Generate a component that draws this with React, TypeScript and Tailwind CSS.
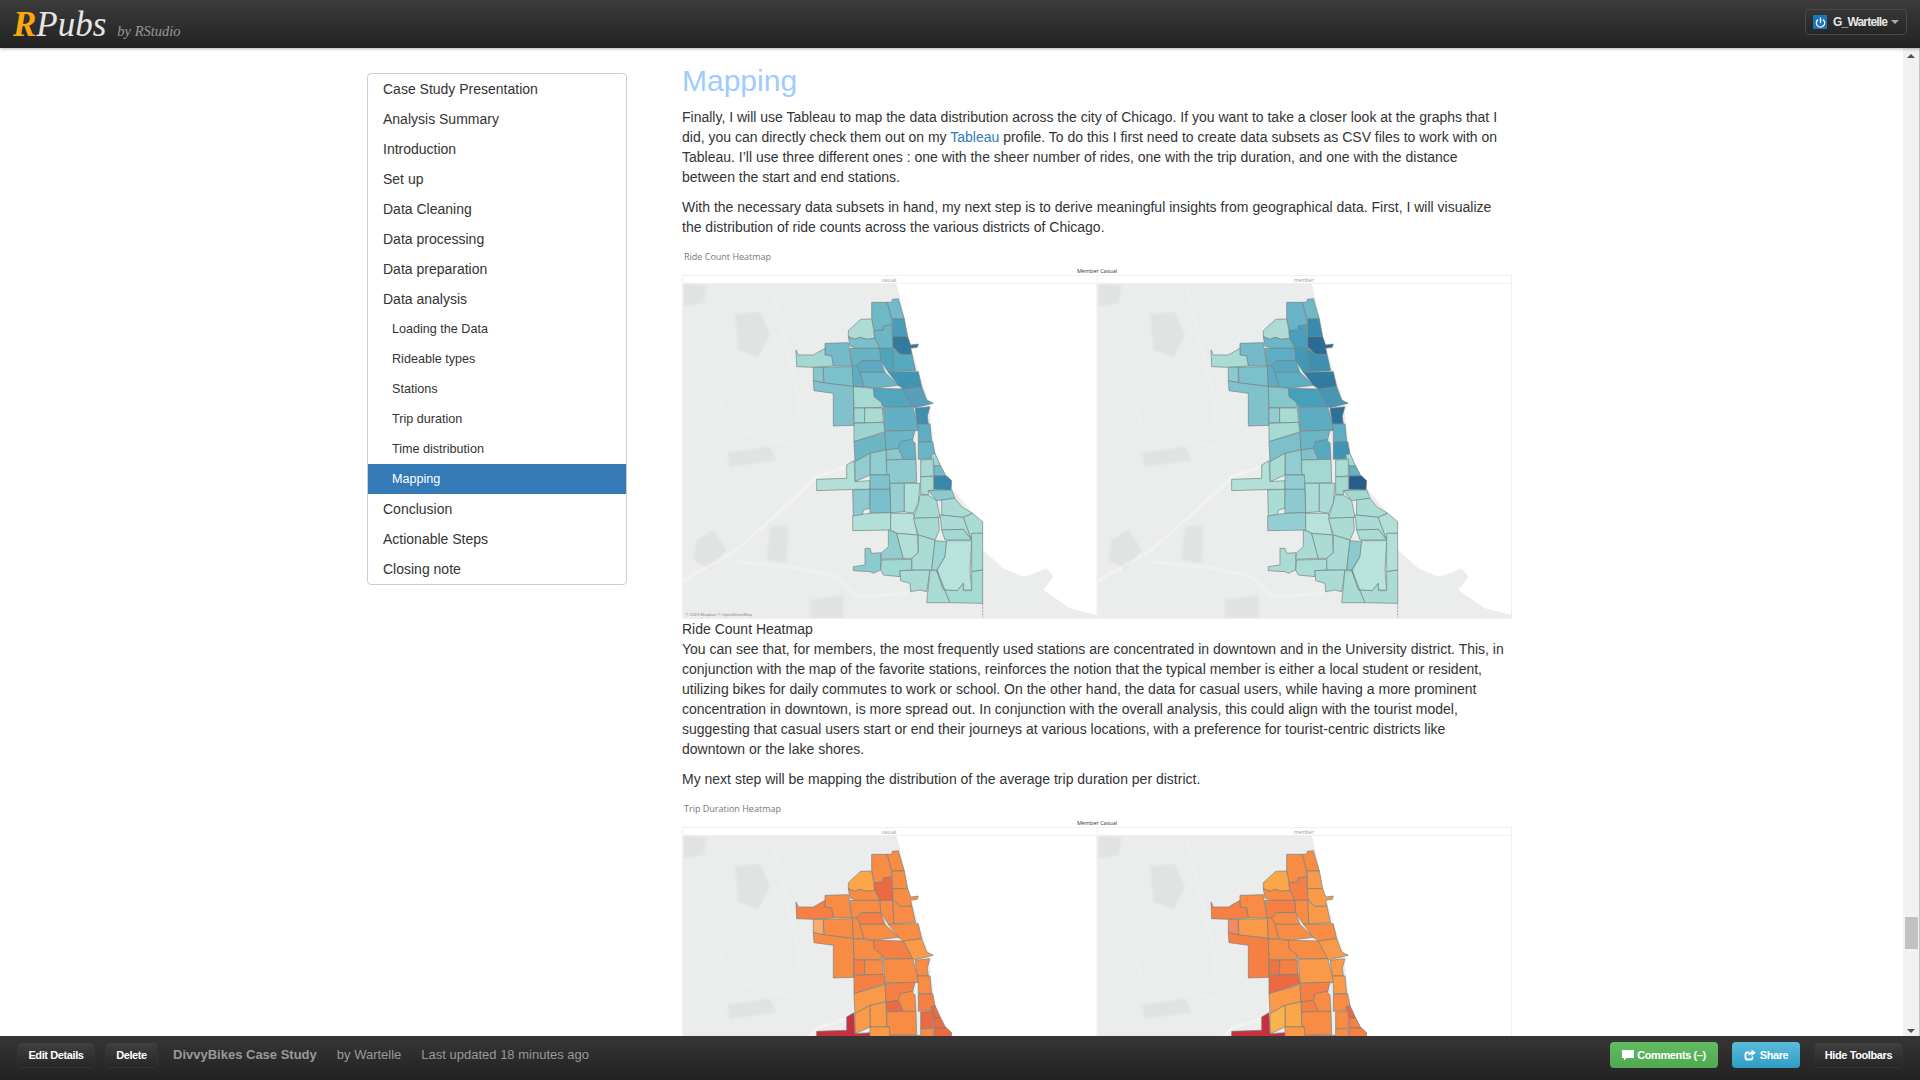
import { Power } from "lucide-react";

type District = { p: string; c: [string, string, string, string] };

const navItems = [
  { label: "Case Study Presentation" },
  { label: "Analysis Summary" },
  { label: "Introduction" },
  { label: "Set up" },
  { label: "Data Cleaning" },
  { label: "Data processing" },
  { label: "Data preparation" },
  { label: "Data analysis" },
  { label: "Loading the Data", sub: true },
  { label: "Rideable types", sub: true },
  { label: "Stations", sub: true },
  { label: "Trip duration", sub: true },
  { label: "Time distribution", sub: true },
  { label: "Mapping", sub: true, active: true },
  { label: "Conclusion" },
  { label: "Actionable Steps" },
  { label: "Closing note" },
];

// orange shades used by the trip duration map
const o1 = "#fa9a48";
const o2 = "#f98c45";
const o3 = "#f67f43";
const o4 = "#ec6a42";

// coordinates are 3x the image's pixels
const districts: District[] = [
  { p: "605,187 652,187 665,235 665,255 640,258 640,270 612,272 605,235", c: ["#6fb8c8", "#69b3c6", o2, o2] },
  { p: "652,187 665,187 667,178 685,176 695,210 703,237 667,237 665,235", c: ["#72bbcb", "#6fb8c8", o2, o2] },
  { p: "667,237 703,237 713,290 668,290", c: ["#4a9db8", "#3a8aab", o2, o1] },
  { p: "668,290 713,290 722,315 745,312 742,322 722,325 726,343 690,343 668,320", c: ["#337a9f", "#2b6b96", o2, o1] },
  { p: "535,272 572,238 605,237 612,272 614,295 590,298 570,292 555,298 535,290", c: ["#aedcd5", "#aedcd5", "#fba748", "#fba748"] },
  { p: "612,272 640,270 640,258 665,255 668,320 672,325 630,325 614,295", c: ["#6db6c6", "#4c9fbb", o4, o3] },
  { p: "535,290 555,298 570,292 590,298 614,295 630,325 560,325 540,318", c: ["#7bbfcc", "#6db6c6", o2, o2] },
  { p: "465,310 535,308 545,378 490,378 485,348 465,345", c: ["#75bac9", "#75bac9", o2, o2] },
  { p: "378,330 385,345 430,345 465,325 465,345 485,348 490,378 430,382 380,380", c: ["#a4d8d2", "#a8dcd5", o3, o3] },
  { p: "540,325 630,325 632,362 575,362 560,378 546,378", c: ["#67b3c5", "#5daec4", o2, o3] },
  { p: "630,325 668,325 672,395 655,397 632,362", c: ["#4fa5bd", "#4299b6", o2, o2] },
  { p: "668,325 690,343 726,343 737,392 672,395", c: ["#57a9c0", "#3d90b0", o2, o1] },
  { p: "575,362 632,362 645,397 570,397 560,378", c: ["#5dabc2", "#56a7c0", o3, o2] },
  { p: "430,382 460,382 460,428 430,422", c: ["#88c6cd", "#8ccad0", "#fbaa6e", "#f28a62"] },
  { p: "460,382 547,380 550,438 462,430", c: ["#7cc0cc", "#7cc0cc", o2, o1] },
  { p: "547,380 560,378 570,397 582,440 550,440", c: ["#5fadc3", "#5fadc3", o2, o2] },
  { p: "570,397 645,397 685,436 610,445 582,440", c: ["#6bb5c6", "#5fadc3", o2, o2] },
  { p: "655,397 745,395 755,440 700,447 685,436", c: ["#3f95b2", "#327aa0", o2, o2] },
  { p: "610,445 700,447 728,500 640,500 634,487 612,470", c: ["#51a5bd", "#47a0bb", o3, o2] },
  { p: "700,447 755,440 770,480 790,490 735,503 728,500", c: ["#599fba", "#4995b4", o1, o1] },
  { p: "735,505 780,500 772,528 775,552 742,552", c: ["#3f8fae", "#2f7099", o2, o1] },
  { p: "550,440 610,445 612,470 634,487 637,502 552,504", c: ["#a6dbd3", "#86c7cc", o2, o2] },
  { p: "430,422 460,428 550,440 552,556 490,558 490,460 432,452", c: ["#80c1cc", "#80c1cc", o2, o3] },
  { p: "552,504 584,504 584,548 552,548", c: ["#a2d8d2", "#93cfd1", o3, "#ef7442"] },
  { p: "584,504 637,504 640,547 584,548", c: ["#a8dcd3", "#a8dcd3", o2, o3] },
  { p: "640,502 728,500 742,552 745,572 645,572", c: ["#63b0c4", "#5dacc2", o2, o1] },
  { p: "552,550 640,547 645,575 552,605", c: ["#9dd4d1", "#a6dbd3", o3, o4] },
  { p: "552,605 645,578 648,628 600,640 555,665", c: ["#6cb6c6", "#7cc0cc", o1, o1] },
  { p: "645,575 735,570 728,600 695,605 685,625 648,630", c: ["#6cb6c6", "#6bb5c6", o3, o3] },
  { p: "742,552 780,552 785,605 745,605 745,575", c: ["#5fadc3", "#5daec4", o2, o1] },
  { p: "690,605 725,598 735,610 738,658 700,658 685,625", c: ["#66b2c5", "#57a9c0", o2, o2] },
  { p: "745,607 788,605 795,640 782,656 745,658", c: ["#6ab5c6", "#4095b3", o3, o2] },
  { p: "648,630 685,625 700,658 650,660", c: ["#8ac8cd", "#80c1cc", o4, o3] },
  { p: "782,645 795,640 812,678 792,678", c: ["#9dd5d2", "#a2d8d2", o4, o4] },
  { p: "792,678 812,678 828,708 792,708", c: ["#72bbc9", "#64b0c4", o4, o3] },
  { p: "792,708 830,708 845,722 843,750 792,748", c: ["#3587ab", "#275d8c", o4, o3] },
  { p: "752,660 790,658 790,708 752,710", c: ["#a4dad3", "#a8dcd5", o4, o2] },
  { p: "650,660 738,658 740,728 660,730 650,700", c: ["#8dcad0", "#a2d8d2", o2, o2] },
  { p: "600,640 648,630 650,700 658,705 600,705", c: ["#90ccd0", "#90ccd0", o1, "#fba748"] },
  { p: "555,665 600,640 600,705 555,725", c: ["#90ccd0", "#a8dcd5", o1, "#fbb24f"] },
  { p: "440,718 530,715 530,675 552,662 555,725 600,722 600,748 555,748 440,752", c: ["#b2e0d8", "#b2e0d8", "#c8303f", "#c8303f"] },
  { p: "600,705 658,705 660,748 600,748", c: ["#80c3cc", "#90ccd0", o1, o1] },
  { p: "752,710 790,710 790,750 775,752 775,765 752,762", c: ["#aadcd5", "#a4dad3", o2, o2] },
  { p: "660,730 703,730 703,815 662,818", c: ["#95cfd1", "#aadcd5", o2, o2] },
  { p: "703,730 750,730 745,790 730,820 703,815", c: ["#b0e0d7", "#aadcd5", o2, o2] },
  { p: "548,750 600,748 600,805 580,810 578,825 550,828", c: ["#8ccad0", "#a8dcd5", o2, o2] },
  { p: "600,748 660,748 662,818 600,820", c: ["#79bfcb", "#8ccad0", o2, o2] },
  { p: "775,752 845,750 855,775 815,780 800,782 790,770", c: ["#8ccad0", "#a0d8d2", o2, o2] },
  { p: "750,765 775,765 800,782 810,832 730,835 745,790", c: ["#a6dbd3", "#aadcd5", o2, o2] },
  { p: "815,780 855,775 875,800 908,820 880,832 815,825", c: ["#aadcd5", "#aadcd5", o2, o2] },
  { p: "548,828 600,820 662,818 662,870 548,872", c: ["#b2e0d8", "#93cfd4", o2, o2] },
  { p: "662,820 730,820 742,885 680,880 662,870", c: ["#b7e3da", "#b7e3da", o2, o2] },
  { p: "730,835 805,832 808,870 795,900 745,885", c: ["#a6dbd3", "#aadcd5", o2, o2] },
  { p: "810,825 880,832 905,900 880,868 815,870", c: ["#aadcd5", "#aadcd5", o2, o2] },
  { p: "880,832 908,820 938,845 938,880 908,880 905,900", c: ["#aadcd5", "#b2e0d8", o2, o2] },
  { p: "815,870 880,868 905,900 825,900", c: ["#a0d8d2", "#aadcd5", o2, o2] },
  { p: "655,870 680,880 700,955 632,958 635,938 655,920", c: ["#92cdd0", "#aadcd5", o2, o2] },
  { p: "680,880 742,885 745,938 725,955 700,955", c: ["#b2e0d8", "#aadcd5", o2, o2] },
  { p: "745,885 795,900 785,990 725,990 725,955 745,938", c: ["#aadcd5", "#aadcd5", o2, o2] },
  { p: "795,902 830,905 825,950 800,990 785,990", c: ["#9dd5d2", "#8ccad0", o2, o2] },
  { p: "830,902 905,902 900,990 905,1050 880,1050 880,1030 862,1052 820,1050 802,990 825,950", c: ["#b7e3da", "#b7e3da", o2, o2] },
  { p: "905,880 938,880 938,990 905,995", c: ["#a6dbd3", "#b2e0d8", o2, o2] },
  { p: "585,925 600,925 605,940 632,938 632,990 610,1000 600,995 550,992 550,980 585,975", c: ["#8ccad0", "#aadcd5", o2, o2] },
  { p: "635,960 725,958 725,990 690,992 690,1010 640,1005 632,990", c: ["#a2d8d2", "#aadcd5", o2, o2] },
  { p: "690,992 780,990 770,1055 750,1050 722,1055 720,1030 692,1022", c: ["#aadcd5", "#aadcd5", o2, o2] },
  { p: "780,992 800,992 840,1088 770,1088", c: ["#aadcd5", "#aadcd5", o2, o2] },
  { p: "800,990 820,1050 862,1052 880,1030 880,1052 905,1052 905,995 938,990 938,1090 840,1088", c: ["#a6dbd3", "#aadcd5", o2, o2] },
];

const lake = "680,130 690,170 715,290 745,395 775,480 795,640 850,750 905,815 938,850 938,930 1000,985 1060,1010 1095,1000 1130,985 1150,1010 1120,1050 1200,1105 1280,1125 1280,130";
const blobs = [
  "195,222 270,215 300,285 265,350 205,330",
  "80,900 130,870 170,930 120,990 70,960",
  "300,860 355,855 350,970 290,960",
  "420,1080 520,1065 520,1135 420,1135",
  "170,640 300,620 320,660 180,680",
  "40,130 110,135 100,190 40,200",
];

function MapPanel({ dx, tone, showCredit }: { dx: number; tone: number; showCredit?: boolean }) {
  return (
    <g transform={`translate(${dx - 12} -8) scale(0.33333)`}>
      <rect x="36" y="130" width="1244" height="1005" fill="#ebecec" />
      <g filter="url(#soft)">
        {blobs.map((b, i) => (
          <polygon key={i} points={b} fill="#e1e2e2" />
        ))}
        <polyline points="36,1025 200,930 390,760 440,710 530,680" fill="none" stroke="#fbfbfb" strokeWidth="4" />
        <polyline points="200,965 390,985 500,1010 560,1070 720,1060" fill="none" stroke="#fbfbfb" strokeWidth="3" />
        <polyline points="150,480 170,560 300,600 390,620 430,680" fill="none" stroke="#f6f6f6" strokeWidth="2" />
        <polyline points="305,135 320,200 385,470 390,560" fill="none" stroke="#f6f6f6" strokeWidth="2" />
      </g>
      <polygon points={lake} fill="#ffffff" />
      {districts.map((d, i) => (
        <polygon key={i} points={d.p} fill={d.c[tone]} stroke="#728080" strokeWidth="2" strokeLinejoin="round" />
      ))}
      <line x1="938" y1="1090" x2="938" y2="1132" stroke="#777777" strokeWidth="2" strokeDasharray="6 4" />
      {showCredit && (
        <text x="46" y="1127" fontSize="13" fill="#8a8a8a" fontFamily="'Liberation Sans', sans-serif">
          © 2023 Mapbox © OpenStreetMap
        </text>
      )}
    </g>
  );
}

function Heatmap({ title, tones, credit }: { title: string; tones: [number, number]; credit?: boolean }) {
  return (
    <svg width="830" height="371" viewBox="0 0 830 371" className="block">
      <defs>
        <filter id="soft" x="-5%" y="-5%" width="110%" height="110%">
          <feGaussianBlur stdDeviation="3" />
        </filter>
      </defs>
      <text x="2" y="11.5" fontSize="9" fill="#777777" fontFamily="'Open Sans', sans-serif">
        {title}
      </text>
      <text x="415" y="25" fontSize="5.5" textAnchor="middle" fill="#333333" fontFamily="'Open Sans', sans-serif">
        Member Casual
      </text>
      <text x="207" y="33.5" fontSize="5" textAnchor="middle" fill="#999999" fontFamily="'Open Sans', sans-serif">
        casual
      </text>
      <text x="622" y="33.5" fontSize="5" textAnchor="middle" fill="#999999" fontFamily="'Open Sans', sans-serif">
        member
      </text>
      <MapPanel dx={0} tone={tones[0]} showCredit={credit} />
      <MapPanel dx={415} tone={tones[1]} />
      <rect x="0.5" y="27.5" width="829" height="343" fill="none" stroke="#f0f0f0" />
      <line x1="0" y1="35.5" x2="830" y2="35.5" stroke="#f0f0f0" />
      <line x1="415" y1="27" x2="415" y2="371" stroke="#f0f0f0" />
    </svg>
  );
}

export default function App() {
  return (
    <div className="h-screen flex flex-col overflow-hidden bg-white text-[14px] leading-[20px] text-[#333] font-['Liberation_Sans',Arial,sans-serif]">
      {/* top bar */}
      <header className="h-[48px] shrink-0 z-10 flex items-start justify-between pl-[13px] pr-[13px] bg-gradient-to-b from-[#3c3c3c] to-[#222] shadow-[0_1px_3px_rgba(0,0,0,0.3)]">
        <div className="mt-[5px] flex items-baseline font-['Liberation_Serif',serif] italic">
          <span className="text-[35px] leading-[40px] font-bold text-[#fba80f]">R</span>
          <span className="text-[35px] leading-[40px] text-[#e6e6e6]">Pubs</span>
          <span className="ml-[11px] text-[14.5px] text-[#999]">by RStudio</span>
        </div>
        <button className="mt-[9px] h-[26px] w-[102px] flex items-center pl-[7px] rounded-[4px] border border-[#4a4a4a] bg-gradient-to-b from-[#363636] to-[#262626] text-[12px] leading-[16px] text-[#e6e6e6] font-bold tracking-[-0.8px]">
          <span className="w-[14px] h-[14px] mr-[6px] flex items-center justify-center bg-[#1a75bb]">
            <Power size={11} strokeWidth={3} color="#ffffff" />
          </span>
          G_Wartelle
          <span className="ml-[4px] border-x-[4px] border-x-transparent border-t-[4px] border-t-[#aaa]" />
        </button>
      </header>

      <div className="flex-1 min-h-0 flex">
        <div className="flex-1 min-w-0 overflow-hidden flex pl-[367px]">
          {/* sidebar */}
          <nav className="w-[260px] shrink-0 self-start mt-[25px] border border-[#ccc] rounded-[4px] overflow-hidden">
            {navItems.map((item) => (
              <div
                key={item.label}
                className={
                  item.active
                    ? "h-[30px] flex items-center pl-[24px] text-[12.6px] bg-[#337ab7] text-white"
                    : item.sub
                      ? "h-[30px] flex items-center pl-[24px] text-[12.6px] text-[#333]"
                      : "h-[30px] flex items-center pl-[15px] text-[14px] text-[#333]"
                }
              >
                {item.label}
              </div>
            ))}
          </nav>

          {/* document */}
          <main className="w-[830px] shrink-0 ml-[55px]">
            <h2 className="mt-[14px] mb-[7px] text-[30px] leading-[38px] font-normal text-[#9fcbff]">Mapping</h2>
            <p className="mb-[10px]">
              Finally, I will use Tableau to map the data distribution across the city of Chicago. If you want to take a closer look at the graphs that I did, you can directly check them out on my <span className="text-[#337ab7]">Tableau</span> profile. To do this I first need to create data subsets as CSV files to work with on Tableau. I’ll use three different ones : one with the sheer number of rides, one with the trip duration, and one with the distance between the start and end stations.
            </p>
            <p className="mb-[11px]">
              With the necessary data subsets in hand, my next step is to derive meaningful insights from geographical data. First, I will visualize the distribution of ride counts across the various districts of Chicago.
            </p>
            <Heatmap title="Ride Count Heatmap" tones={[0, 1]} credit />
            <div>Ride Count Heatmap</div>
            <p className="mb-[10px]">
              You can see that, for members, the most frequently used stations are concentrated in downtown and in the University district. This, in conjunction with the map of the favorite stations, reinforces the notion that the typical member is either a local student or resident, utilizing bikes for daily commutes to work or school. On the other hand, the data for casual users, while having a more prominent concentration in downtown, is more spread out. In conjunction with the overall analysis, this could align with the tourist model, suggesting that casual users start or end their journeys at various locations, with a preference for tourist-centric districts like downtown or the lake shores.
            </p>
            <p className="mb-[11px]">My next step will be mapping the distribution of the average trip duration per district.</p>
            <Heatmap title="Trip Duration Heatmap" tones={[2, 3]} />
          </main>
        </div>

        {/* scrollbar */}
        <div className="w-[17px] shrink-0 flex flex-col items-center bg-[#f1f1f1] border-r border-[#c4c4c4] pt-[6px] pb-[3px]">
          <span className="border-x-[4px] border-x-transparent border-b-[4px] border-b-[#505050]" />
          <div className="mt-[859px] w-[13px] h-[32px] bg-[#c1c1c1]" />
          <span className="mt-auto border-x-[4px] border-x-transparent border-t-[4px] border-t-[#505050]" />
        </div>
      </div>

      {/* bottom bar */}
      <footer className="h-[44px] shrink-0 z-10 flex items-start justify-between pt-[6px] px-[17px] bg-gradient-to-b from-[#363636] to-[#222]">
        <div className="flex items-center text-[13px] text-[#999]">
          <button className="h-[26px] w-[78px] rounded-[4px] border border-[#333] bg-gradient-to-b from-[#404040] to-[#262626] text-[11px] font-bold tracking-[-0.4px] text-white">
            Edit Details
          </button>
          <button className="ml-[10px] h-[26px] w-[53px] rounded-[4px] border border-[#333] bg-gradient-to-b from-[#404040] to-[#262626] text-[11px] font-bold tracking-[-0.4px] text-white">
            Delete
          </button>
          <span className="ml-[15px] font-bold">DivvyBikes Case Study</span>
          <span className="ml-[20px]">by Wartelle</span>
          <span className="ml-[20px]">Last updated 18 minutes ago</span>
        </div>
        <div className="flex items-center text-[11px] font-bold tracking-[-0.4px] text-white">
          <button className="h-[26px] w-[108px] flex items-center justify-center gap-[3px] rounded-[4px] bg-gradient-to-b from-[#62bd62] to-[#4fa84f]">
            <svg width="12" height="12" viewBox="0 0 12 12" fill="#ffffff">
              <path d="M0 1h12v8H4.5L2 11.5V9H0z" />
            </svg>
            Comments (–)
          </button>
          <button className="ml-[14px] h-[26px] w-[68px] flex items-center justify-center gap-[4px] rounded-[4px] bg-gradient-to-b from-[#5bbddb] to-[#2d9cc4]">
            <svg width="12" height="12" viewBox="0 0 12 12" fill="none">
              <path d="M8.5 7.5v1.5a1.5 1.5 0 0 1-1.5 1.5H3A1.5 1.5 0 0 1 1.5 9V5A1.5 1.5 0 0 1 3 3.5h2" stroke="#ffffff" strokeWidth="1.8" />
              <path d="M7.5 0.5L12 3.8 7.5 7V5.2C5.8 5.2 4.8 6 4.2 7.3 4.2 4.8 5.4 2.7 7.5 2.5z" fill="#ffffff" />
            </svg>
            Share
          </button>
          <button className="ml-[14px] h-[26px] w-[89px] rounded-[4px] border border-[#333] bg-gradient-to-b from-[#404040] to-[#262626]">
            Hide Toolbars
          </button>
        </div>
      </footer>
    </div>
  );
}
